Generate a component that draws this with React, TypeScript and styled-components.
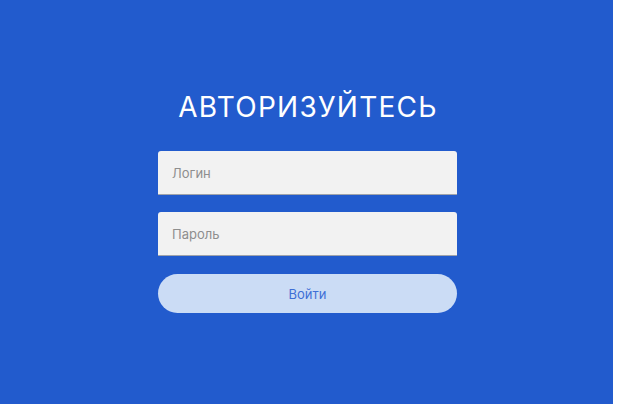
import React from "react";
import styled, { createGlobalStyle } from "styled-components";

const GlobalStyle = createGlobalStyle`
  html, body {
    margin: 0;
    padding: 0;
    background: #ffffff;
  }
  body {
    font-family: Inter, "Noto Sans", sans-serif;
  }
  * { box-sizing: border-box; }
`;

const Page = styled.main`
  width: 613px;
  height: 404px;
  padding-left: 2px;
  padding-bottom: 1px;
  background: #225bcd;
  display: flex;
  flex-direction: column;
  align-items: center;
  justify-content: center;
`;

const Title = styled.h1`
  margin: 0 0 27px;
  padding-left: 1px;
  font-family: Inter, sans-serif;
  font-weight: 400;
  font-size: 28px;
  line-height: 34px;
  letter-spacing: 1.25px;
  color: #ffffff;
`;

const Form = styled.form`
  width: 299px;
  display: flex;
  flex-direction: column;
`;

const Field = styled.input<{ $gap: number }>`
  height: 44px;
  width: 100%;
  margin-bottom: ${(p) => p.$gap}px;
  padding: 0 14px;
  border: none;
  border-radius: 3px 3px 0 0;
  border-bottom: 1px solid #9fa3ab;
  background: #f2f2f2;
  font-family: Inter, sans-serif;
  font-size: 13px;
  color: #333;
  outline: none;
  &::placeholder {
    color: #8e8e8e;
  }
`;

const Submit = styled.button`
  height: 39px;
  width: 100%;
  border: none;
  border-radius: 20px;
  background: #cbdcf5;
  color: #3f6fd6;
  font-family: Inter, sans-serif;
  font-size: 13px;
  cursor: pointer;
`;

export default function App() {
  return (
    <>
      <GlobalStyle />
      <Page>
        <Title>АВТОРИЗУЙТЕСЬ</Title>
        <Form onSubmit={(e) => e.preventDefault()}>
          <Field $gap={17} type="text" placeholder="Логин" />
          <Field $gap={18} type="password" placeholder="Пароль" />
          <Submit type="submit">Войти</Submit>
        </Form>
      </Page>
    </>
  );
}
